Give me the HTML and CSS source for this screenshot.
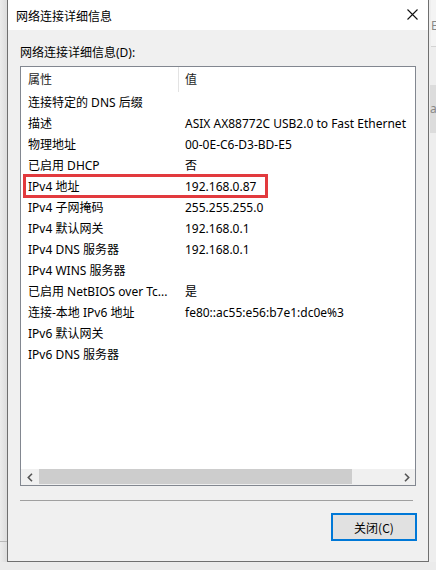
FILE: index.html
```html
<!DOCTYPE html>
<html lang="zh-CN">
<head>
  <meta charset="UTF-8">
  <meta name="viewport" content="width=device-width, initial-scale=1.0">
  <title>网络连接详细信息</title>
  <link rel="stylesheet" href="styles.css">
</head>
<body>

  <div class="desktop">
    <!-- Strip of desktop to the left of the dialog -->
    <div class="side side-left">
      <div class="side-line"></div>
    </div>

    <!-- Dialog window -->
    <div class="window">
      <div class="titlebar">
        <span class="title">网络连接详细信息</span>
        <svg class="close-x" width="11" height="11" viewBox="0 0 11 11">
          <path d="M0.5 0.5 L10.5 10.5 M10.5 0.5 L0.5 10.5" stroke="#111" stroke-width="1.1" fill="none"/>
        </svg>
      </div>

      <div class="content">
        <div class="label">网络连接详细信息(D):</div>

        <div class="listbox">
          <div class="list-head">
            <div class="col-name">属性</div>
            <div class="col-value">值</div>
          </div>

          <div class="list-rows">
            <div class="row"><div class="col-name">连接特定的 DNS 后缀</div><div class="col-value"></div></div>
            <div class="row"><div class="col-name">描述</div><div class="col-value">ASIX AX88772C USB2.0 to Fast Ethernet</div></div>
            <div class="row"><div class="col-name">物理地址</div><div class="col-value">00-0E-C6-D3-BD-E5</div></div>
            <div class="row"><div class="col-name">已启用 DHCP</div><div class="col-value">否</div></div>
            <div class="row row-marked">
              <div class="col-name">IPv4 地址</div><div class="col-value">192.168.0.87</div>
              <div class="mark"></div>
            </div>
            <div class="row"><div class="col-name">IPv4 子网掩码</div><div class="col-value">255.255.255.0</div></div>
            <div class="row"><div class="col-name">IPv4 默认网关</div><div class="col-value">192.168.0.1</div></div>
            <div class="row"><div class="col-name">IPv4 DNS 服务器</div><div class="col-value">192.168.0.1</div></div>
            <div class="row"><div class="col-name">IPv4 WINS 服务器</div><div class="col-value"></div></div>
            <div class="row"><div class="col-name">已启用 NetBIOS over Tc...</div><div class="col-value">是</div></div>
            <div class="row"><div class="col-name">连接-本地 IPv6 地址</div><div class="col-value">fe80::ac55:e56:b7e1:dc0e%3</div></div>
            <div class="row"><div class="col-name">IPv6 默认网关</div><div class="col-value"></div></div>
            <div class="row"><div class="col-name">IPv6 DNS 服务器</div><div class="col-value"></div></div>
          </div>

          <!-- Horizontal scrollbar -->
          <div class="hscroll">
            <div class="arrow">
              <svg width="6" height="9" viewBox="0 0 6 9"><path d="M5 0.8 L1.3 4.5 L5 8.2" stroke="#555" stroke-width="1.6" fill="none"/></svg>
            </div>
            <div class="thumb"></div>
            <div class="track"></div>
            <div class="arrow">
              <svg width="6" height="9" viewBox="0 0 6 9"><path d="M1 0.8 L4.7 4.5 L1 8.2" stroke="#555" stroke-width="1.6" fill="none"/></svg>
            </div>
          </div>
        </div>

        <div class="separator"></div>

        <div class="actions">
          <button class="btn-close">关闭(C)</button>
        </div>
      </div>
    </div>

    <!-- Strip of the app behind, to the right -->
    <div class="side side-right">
      <div class="peek-top">E"</div>
      <div class="peek-mid">a</div>
    </div>
  </div>

</body>
</html>
```

FILE: styles.css
```css
/* Page */
html, body {
  margin: 0;
  padding: 0;
}

body {
  font-family: "Noto Sans", "Noto Sans CJK SC", sans-serif;
  font-size: 12px;
  color: #000;
  background: #ebebeb;
}

.desktop {
  display: flex;
  width: 436px;
  height: 570px;
  overflow: hidden;
  background: #ebebeb;
}

/* Desktop strips around the dialog */
.side {
  flex: 0 0 7px;
  height: 562px;
}

.side-left {
  background: linear-gradient(to right, #ececec, #dcdcdc);
  display: flex;
  flex-direction: column;
  justify-content: flex-end;
}

.side-line {
  height: 1px;
  background: #b8b8b8;
  margin-bottom: 20px;
}

.side-right {
  background: #eeeeee;
  overflow: hidden;
  font-size: 12px;
  color: #888;
}

.peek-top {
  height: 26px;
  padding-top: 20px;
  margin-left: 2px;
  line-height: 12px;
  border-bottom: 1px solid #d4d4d4;
  white-space: nowrap;
  background: #f4f4f4;
}

.peek-mid {
  margin-top: 38px;
  height: 48px;
  line-height: 48px;
  background: #dcdcdc;
  margin-left: 1px;
}

/* Dialog */
.window {
  flex: 0 0 420px;
  height: 561px;
  border: 1px solid #6f6f6f;
  border-top: none;
  display: flex;
  flex-direction: column;
  background: #f0f0f0;
}

.titlebar {
  height: 30px;
  background: #fff;
  display: flex;
  align-items: center;
  justify-content: space-between;
  padding: 0 10px 0 8px;
}

.title {
  font-family: "Noto Sans CJK SC", sans-serif;
  font-size: 12px;
  color: #000;
}

.close-x {
  margin-top: -1px;
}

.content {
  flex: 1;
  display: flex;
  flex-direction: column;
  padding: 15px 12px 0 12px;
}

.label {
  height: 16px;
  line-height: 16px;
  color: #000;
}

/* List view */
.listbox {
  margin-top: 5px;
  height: 418px;
  border: 1px solid #828790;
  background: #fff;
  display: flex;
  flex-direction: column;
  overflow: hidden;
}

.list-head {
  display: flex;
  height: 25px;
  line-height: 25px;
  color: #1e1e1e;
}

.list-head .col-name {
  border-right: 1px solid #e3e3e3;
}

.list-rows {
  flex: 1;
}

.row {
  position: relative;
  display: flex;
  height: 21px;
  line-height: 21px;
}

.col-name {
  flex: 0 0 150px;
  padding-left: 7px;
  white-space: nowrap;
  overflow: hidden;
}

.col-value {
  flex: 1;
  padding-left: 6px;
  white-space: nowrap;
  overflow: hidden;
}

.row .col-value {
  padding-left: 7px;
}

/* Red annotation box around the IPv4 address row */
.mark {
  position: absolute;
  left: 2px;
  top: -2px;
  width: 239px;
  height: 18px;
  border: 3px solid #e23a3e;
}

/* Horizontal scrollbar */
.hscroll {
  display: flex;
  height: 16px;
  background: #f0f0f0;
}

.arrow {
  flex: 0 0 17px;
  display: flex;
  align-items: center;
  justify-content: center;
}

.thumb {
  flex: 0 0 313px;
  margin: 0 0 1px 1px;
  background: #cdcdcd;
}

.track {
  flex: 1;
}

/* Bottom of dialog */
.separator {
  margin-top: 14px;
  height: 1px;
  background: #a0a0a0;
  margin-right: 3px;
}

.actions {
  display: flex;
  justify-content: flex-end;
  margin-top: 12px;
}

.btn-close {
  width: 86px;
  height: 28px;
  border: 2px solid #0078d7;
  background: #e1e1e1;
  font-family: "Noto Sans CJK SC", "Noto Sans", sans-serif;
  font-size: 12px;
  color: #000;
  padding: 0;
  margin-right: -1px;
}
```
